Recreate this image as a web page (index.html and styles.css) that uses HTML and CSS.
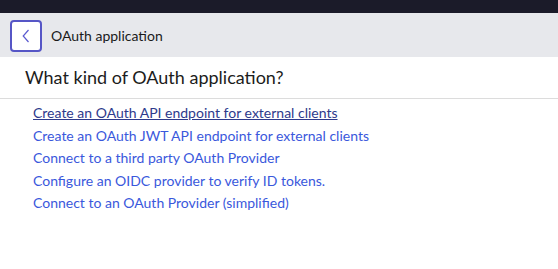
FILE: index.html
```html
<!DOCTYPE html>
<html>
<head>
<meta charset="utf-8">
<link rel="stylesheet" href="styles.css">
</head>
<body>
<div class="topbar"></div>
<div class="header">
  <button class="back" aria-label="Back">
    <svg width="8" height="14" viewBox="0 0 8 14"><path d="M6.5 1 L1.2 7 L6.5 13" fill="none" stroke="#5a5ad0" stroke-width="1.2"/></svg>
  </button>
  <span class="title">OAuth application</span>
</div>
<h1 class="question">What kind of OAuth application?</h1>
<ul class="links">
  <li><a class="active" href="#">Create an OAuth API endpoint for external clients</a></li>
  <li><a href="#">Create an OAuth JWT API endpoint for external clients</a></li>
  <li><a href="#">Connect to a third party OAuth Provider</a></li>
  <li><a href="#">Configure an OIDC provider to verify ID tokens.</a></li>
  <li><a href="#">Connect to an OAuth Provider (simplified)</a></li>
</ul>
</body>
</html>
```
FILE: styles.css
```css
* { box-sizing: border-box; }
body {
  margin: 0;
  font-family: Lato, "Open Sans", sans-serif;
  background: #fff;
  color: #1c1c1c;
}
.topbar { height: 13px; background: #1b1b29; }
.header {
  height: 44px;
  background: #e7e8ec;
  display: flex;
  align-items: center;
  padding-left: 10px;
  gap: 9px;
}
.back {
  width: 32px;
  height: 32px;
  border: 2.5px solid #5656c6;
  border-radius: 4px;
  background: #fff;
  display: flex;
  align-items: center;
  justify-content: center;
  padding: 0;
  margin-top: 1px;
}
.title { font-size: 14px; color: #1a1a1a; }
.question {
  margin: 0;
  font-size: 18px;
  font-weight: 400;
  padding: 10px 0 10px 25px;
  height: 42px;
  border-bottom: 1px solid #dcdcdc;
  line-height: 21px;
}
.links {
  list-style: none;
  margin: 0;
  padding: 3px 0 0 33px;
}
.links li { height: 22.5px; line-height: 22.5px; font-size: 14px; }
.links a { color: #3a58dc; text-decoration: none; }
.links a.active { color: #2e3a8c; text-decoration: underline; }
```
